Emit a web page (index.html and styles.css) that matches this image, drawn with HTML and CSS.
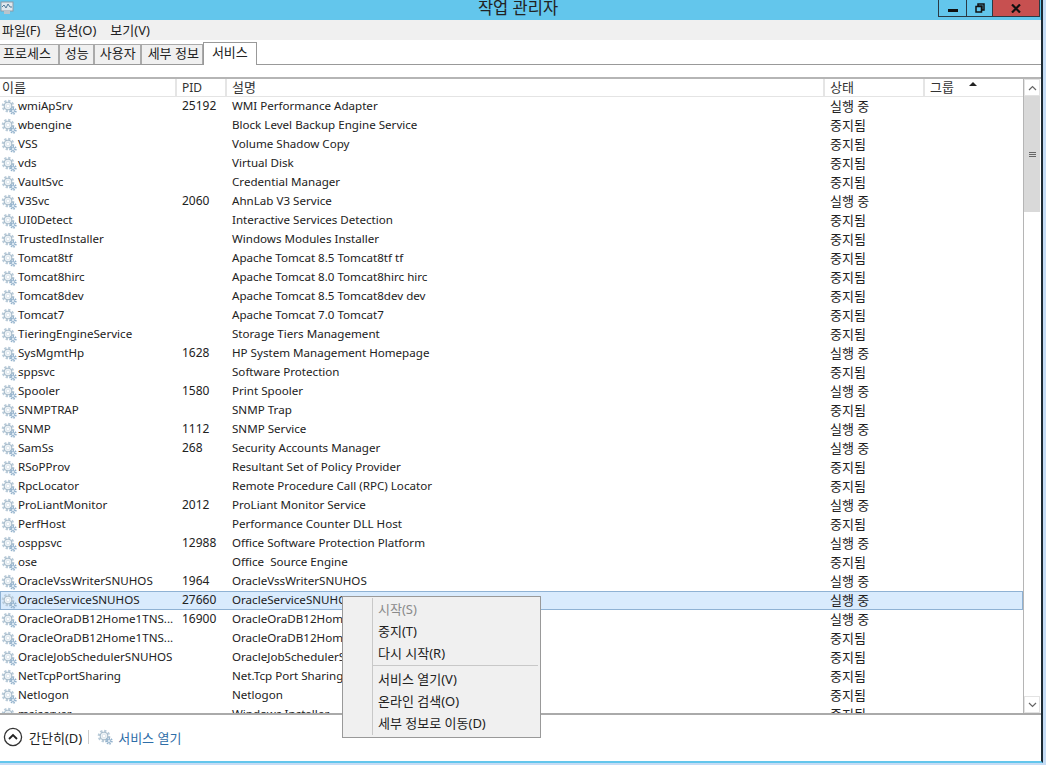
FILE: index.html
```html
<!DOCTYPE html>
<html lang="ko">
<head>
<meta charset="utf-8">
<title>작업 관리자</title>
<link rel="stylesheet" href="styles.css">
</head>
<body>
<svg class="defs" width="0" height="0" aria-hidden="true">
  <symbol id="gear" viewBox="0 0 16 16">
    <circle cx="7" cy="7" r="4.8" fill="none" stroke="#b9cbd9" stroke-width="3" stroke-dasharray="2.1 1.6"/>
    <circle cx="7" cy="7" r="3.9" fill="#f0f5f8" stroke="#a3b8c8" stroke-width="1"/>
    <circle cx="7" cy="7" r="1.8" fill="#fff" stroke="#d0dce5" stroke-width=".7"/>
    <circle cx="12" cy="12" r="2.7" fill="none" stroke="#93b2cc" stroke-width="2" stroke-dasharray="1.4 1"/>
    <circle cx="12" cy="12" r="1.6" fill="#e2edf5" stroke="#86a8c5" stroke-width=".7"/>
  </symbol>
</svg>
<div class="window">
  <header class="titlebar">
    <svg class="appicon" width="14" height="14" viewBox="0 0 14 14"><rect x="1" y="1" width="12" height="9" fill="#dfe8ee" stroke="#8c9aa6"/><path d="M2 6l2-2 2 3 2-4 2 3h2" fill="none" stroke="#4d7a9a"/><rect x="4" y="10" width="6" height="3" fill="#b8c4cc"/></svg>
    <span class="title">작업 관리자</span>
    <div class="winbtns">
      <div class="winbtn min"><span class="minbar"></span></div>
      <div class="winbtn restore"><svg width="10" height="10" viewBox="0 0 10 10"><path d="M3 1h6v6H7V3H3z M1 3.5h5.5V9H1z" fill="none" stroke="#111" stroke-width="1.5"/></svg></div>
      <div class="winbtn close"><svg width="10" height="9" viewBox="0 0 10 9"><path d="M1 .5l8 8M9 .5l-8 8" stroke="#111" stroke-width="2.2"/></svg></div>
    </div>
  </header>
  <nav class="menubar"><span>파일(F)</span><span>옵션(O)</span><span>보기(V)</span></nav>
  <div class="tabs">
    <span class="tab">프로세스</span><span class="tab">성능</span><span class="tab">사용자</span><span class="tab">세부 정보</span><span class="tab active">서비스</span>
  </div>
  <section class="list">
    <div class="listmain">
      <div class="head row">
        <span class="cell c-name">이름</span><span class="cell c-pid">PID</span><span class="cell c-desc">설명</span><span class="cell c-state">상태</span><span class="cell c-group">그룹<i class="sort"></i></span>
      </div>
      <div class="rows" id="rows"></div>
    </div>
    <div class="scrollbar">
      <div class="sb-btn"><svg width="9" height="6" viewBox="0 0 9 6"><path d="M1 5l3.5-3.5L8 5" fill="none" stroke="#666" stroke-width="1.2"/></svg></div>
      <div class="sb-track"><div class="sb-thumb"><i></i><i></i><i></i></div></div>
      <div class="sb-btn"><svg width="9" height="6" viewBox="0 0 9 6"><path d="M1 1l3.5 3.5L8 1" fill="none" stroke="#666" stroke-width="1.2"/></svg></div>
    </div>
  </section>
  <footer class="footer">
    <span class="collapse"><svg width="20" height="20" viewBox="0 0 20 20"><circle cx="10" cy="10" r="8.6" fill="#fff" stroke="#333" stroke-width="1.3"/><path d="M6 12l4-4 4 4" fill="none" stroke="#222" stroke-width="1.8"/></svg>간단히(D)</span>
    <span class="sep"></span>
    <span class="openlink"><svg width="16" height="16"><use href="#gear"/></svg>서비스 열기</span>
  </footer>
</div>
<div class="menu">
  <div class="mi disabled">시작(S)</div>
  <div class="mi">중지(T)</div>
  <div class="mi">다시 시작(R)</div>
  <div class="msep"></div>
  <div class="mi">서비스 열기(V)</div>
  <div class="mi">온라인 검색(O)</div>
  <div class="mi">세부 정보로 이동(D)</div>
</div>
<script src="app.js"></script>
</body>
</html>
```
FILE: app.js
```js
const R = "실행 중", S = "중지됨";
const data = [
["wmiApSrv","25192","WMI Performance Adapter",R],
["wbengine","","Block Level Backup Engine Service",S],
["VSS","","Volume Shadow Copy",S],
["vds","","Virtual Disk",S],
["VaultSvc","","Credential Manager",S],
["V3Svc","2060","AhnLab V3 Service",R],
["UI0Detect","","Interactive Services Detection",S],
["TrustedInstaller","","Windows Modules Installer",S],
["Tomcat8tf","","Apache Tomcat 8.5 Tomcat8tf tf",S],
["Tomcat8hirc","","Apache Tomcat 8.0 Tomcat8hirc hirc",S],
["Tomcat8dev","","Apache Tomcat 8.5 Tomcat8dev dev",S],
["Tomcat7","","Apache Tomcat 7.0 Tomcat7",S],
["TieringEngineService","","Storage Tiers Management",S],
["SysMgmtHp","1628","HP System Management Homepage",R],
["sppsvc","","Software Protection",S],
["Spooler","1580","Print Spooler",R],
["SNMPTRAP","","SNMP Trap",S],
["SNMP","1112","SNMP Service",R],
["SamSs","268","Security Accounts Manager",R],
["RSoPProv","","Resultant Set of Policy Provider",S],
["RpcLocator","","Remote Procedure Call (RPC) Locator",S],
["ProLiantMonitor","2012","ProLiant Monitor Service",R],
["PerfHost","","Performance Counter DLL Host",S],
["osppsvc","12988","Office Software Protection Platform",R],
["ose","","Office  Source Engine",S],
["OracleVssWriterSNUHOS","1964","OracleVssWriterSNUHOS",R],
["OracleServiceSNUHOS","27660","OracleServiceSNUHOS",R,1],
["OracleOraDB12Home1TNS...","16900","OracleOraDB12Home1TNSListener",R],
["OracleOraDB12Home1TNS...","","OracleOraDB12Home1TNSListener",S],
["OracleJobSchedulerSNUHOS","","OracleJobSchedulerSNUHOS",S],
["NetTcpPortSharing","","Net.Tcp Port Sharing Service",S],
["Netlogon","","Netlogon",S],
["msiserver","","Windows Installer",S]
];
const host = document.getElementById("rows");
for (const [name, pid, desc, state, sel] of data) {
  const row = document.createElement("div");
  row.className = "row item" + (sel ? " selected" : "");
  const add = (cls, text) => {
    const c = document.createElement("span");
    c.className = "cell " + cls;
    c.textContent = text;
    row.appendChild(c);
    return c;
  };
  const n = add("c-name", "");
  n.innerHTML = '<svg class="gear" width="16" height="16"><use href="#gear"/></svg>';
  n.appendChild(document.createTextNode(name));
  add("c-pid", pid);
  add("c-desc", desc);
  add("c-state", state);
  add("c-group", "");
  host.appendChild(row);
}
```
FILE: styles.css
```css
* { box-sizing: border-box; }
html, body { margin: 0; padding: 0; height: 100%; overflow: hidden; }
body {
  width: 1046px; height: 765px; background: #c5dcf5; position: relative;
  font: 13px "Noto Sans", "Noto Sans CJK KR", sans-serif; color: #222;
}
.defs { position: absolute; }
.window {
  width: 1043px; height: 763px; background: #fff;
  border-right: 2px solid #1c2a33; display: flex; flex-direction: column;
  border-bottom: 2px solid #63c6ec;
}
.titlebar {
  height: 20px; background: #63c6ec; display: flex; align-items: flex-start; position: relative; flex: none;
}
.appicon { margin: 1px 0 0 0; }
.title { position: absolute; left: 0; right: 0; text-align: center; font-size: 16.5px; line-height: 16px; top: 0; color: #222; padding-right: 5px; }
.winbtns { position: absolute; right: 1px; top: 0; display: flex; height: 17px; border: 1px solid #2a3a44; border-top: 0; }
.winbtn { display: flex; align-items: center; justify-content: center; border-right: 1px solid #2a3a44; }
.winbtn.min { width: 28px; }
.winbtn.restore { width: 26px; }
.winbtn.close { width: 46px; background: #c75050; border-right: 0; }
.minbar { width: 10px; height: 3px; background: #111; margin-top: 5px; }
.menubar { height: 20px; background: #f0f0f0; display: flex; gap: 14px; align-items: center; padding: 0 0 2px 2px; flex: none; }
.tabs { height: 25px; display: flex; align-items: flex-end; border-bottom: 1px solid #999; flex: none; }
.tab {
  height: 20px; background: #f0f0f0; border-right: 2px solid #aaa; border-top: 1px solid #aaa; padding: 0 4px 0 5px;
  line-height: 17px; display: block;
}
.tab:first-child { padding: 0 7px 0 3px; }
.tab:nth-child(4) { padding: 0 3px 0 6px; }
.tab.active { height: 23px; background: #fff; border: 1px solid #999; border-bottom: 0; padding: 0 8px; margin-bottom: -1px; line-height: 19px; position: relative; margin-left: -1px; }
.list { margin-top: 12px; height: 638px; display: flex; border-top: 2px solid #b5b5b5; border-bottom: 2px solid #aaa; flex: none; overflow: hidden; }
.listmain { width: 1023px; flex: none; overflow: hidden; }
.row { display: flex; height: 19px; line-height: 19px; white-space: pre; }
.item { line-height: 17px; }
.item .c-state { line-height: 19px; }
.head { height: 18px; line-height: 17px; border-bottom: 1px solid #e4e4e4; color: #333; }
.head .cell { border-right: 2px solid #e5e5e5; }
.cell { display: block; overflow: hidden; flex: none; padding-left: 5px; }
.c-name { width: 177px; padding-left: 2px; font-size: 11.6px; }
.head .c-name { font-size: 13px; }
.c-pid { width: 50px; font-size: 12px; }
.c-desc { width: 598px; font-size: 11.6px; }
.head .c-desc { font-size: 13px; }
.c-state { width: 100px; }
.c-group { width: 98px; position: relative; }
.head .c-group { border-right: 0; }
.sort { position: absolute; left: 44px; top: 3px; width: 0; height: 0; border: 4px solid transparent; border-top: 0; border-bottom: 4px solid #222; }
.item .c-name { display: flex; align-items: flex-start; padding-left: 1px; }
.gear { flex: none; margin: 2px 1px 0 0; }
.selected { background: #d9ebfd; box-shadow: inset 0 0 0 1px #8fb2d4; }
.scrollbar { width: 17px; border-left: 1px solid #b5b5b5; display: flex; flex-direction: column; flex: none; }
.sb-btn { height: 17px; display: flex; align-items: center; justify-content: center; background: #fff; flex: none; border: 1px solid #e3e3e3; }
.sb-track { flex: 1; background: #fff; }
.sb-thumb { height: 116px; background: #d9d9d9; display: flex; flex-direction: column; align-items: center; justify-content: center; gap: 1px; }
.sb-thumb i { display: block; width: 7px; height: 1px; background: #666; }
.footer { flex: 1; display: flex; align-items: center; padding: 0 0 2px 3px; }
.collapse { display: flex; align-items: center; gap: 6px; color: #222; }
.sep { width: 1px; height: 14px; background: #ccc; margin: 0 8px 0 6px; }
.openlink { display: flex; align-items: center; gap: 5px; color: #2f6ea8; }
.menu {
  position: absolute; left: 342px; top: 596px; width: 199px; height: 142px;
  background: #f0f0f0; border: 1px solid #999; padding: 1px 0 0 0; color: #222;
}
.menu::before { content: ""; position: absolute; left: 29px; top: 1px; bottom: 2px; width: 1px; background: #c8c8c8; }
.mi { height: 22px; line-height: 22px; padding-left: 35px; }
.mi.disabled { color: #8a8a8a; }
.msep { height: 1px; background: #c8c8c8; margin: 1px 2px 2px 30px; }
```
